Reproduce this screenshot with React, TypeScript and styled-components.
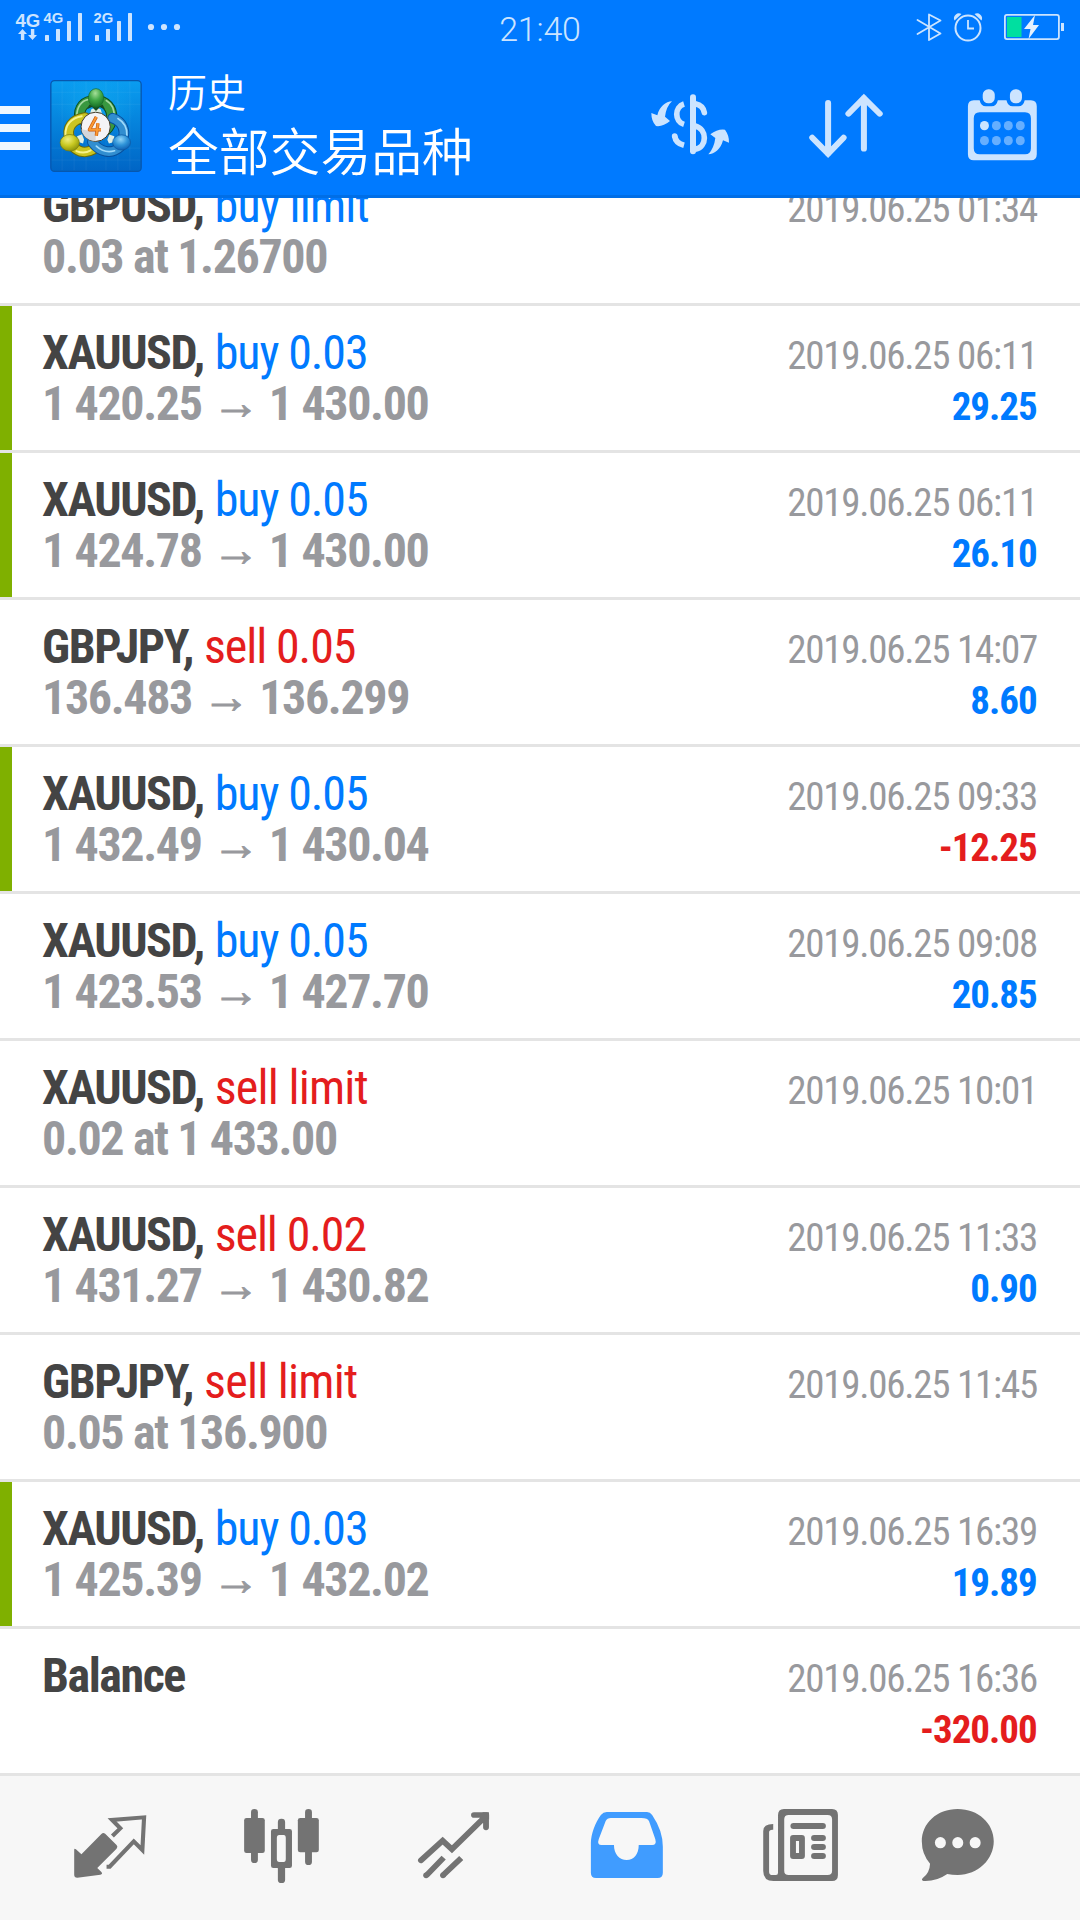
import React from "react";
import styled, { createGlobalStyle } from "styled-components";

const BLUE = "#007aff";
const RED = "#e41d1d";
const GREY = "#98999d";
const PALE = "#cce4ff";
const ICON = "#737373";

const GlobalStyle = createGlobalStyle`
  *, *::before, *::after { box-sizing: border-box; }
  body { margin: 0; background: #fff; }
`;

const Screen = styled.div`
  width: 1080px;
  height: 1920px;
  display: flex;
  flex-direction: column;
  overflow: hidden;
  background: #fff;
  font-family: "Roboto Condensed", Roboto, "Liberation Sans", sans-serif;
`;

const Header = styled.header`
  flex: none;
  height: 198px;
  background: ${BLUE};
  border-bottom: 3px solid #006ee6;
`;

const StatusBar = styled.div`
  height: 54px;
  display: grid;
  grid-template-columns: 1fr 120px 1fr;
  align-items: center;
`;

const Clock = styled.time`
  font-family: Roboto, "Liberation Sans", sans-serif;
  font-weight: 350;
  font-size: 34px;
  line-height: 50px;
  padding-top: 4px;
  text-align: center;
  letter-spacing: -0.2px;
  color: ${PALE};
`;

const StatusRight = styled.div`
  display: flex;
  justify-content: flex-end;
`;

const AppBar = styled.div`
  height: 141px;
  display: flex;
  align-items: center;
`;

const MenuButton = styled.div`
  width: 30px;
  display: flex;
  flex-direction: column;
  gap: 10px;
  padding-top: 6px;
`;

const MenuLine = styled.i`
  height: 8px;
  background: #eff7ff;
`;

const LogoBox = styled.div`
  width: 92px;
  height: 92px;
  margin-left: 20px;
  margin-top: 2px;
`;

const Titles = styled.div`
  flex: 1;
  padding: 0 0 7px 26px;
  color: #fff;
  font-family: "Noto Sans CJK SC", sans-serif;
  font-weight: 350;
  white-space: nowrap;
`;

const Subtitle = styled.div`
  font-size: 39px;
  line-height: 56px;
`;

const Title = styled.div`
  font-size: 50.8px;
  line-height: 62px;
`;

const Action = styled.div`
  width: 156px;
  display: flex;
  justify-content: center;
`;

const List = styled.main`
  flex: none;
  height: 1578px;
  overflow: hidden;
`;

const Row = styled.article<{ $marked?: boolean; $clipped?: boolean }>`
  height: 147px;
  margin-top: ${(p) => (p.$clipped ? "-39px" : "0")};
  padding: 21px 42px 0 30px;
  border-bottom: 3px solid #e4e4e4;
  background: linear-gradient(#7fb000, #7fb000) no-repeat 0 0 / ${(p) => (p.$marked ? "12px" : "0")} 100%;
`;

const Line = styled.div`
  height: 51px;
  line-height: 51px;
  padding-left: 12px;
  display: flex;
  justify-content: space-between;
  align-items: baseline;
  white-space: nowrap;
`;

const Operation = styled.span`
  font-size: 48px;
`;

const Symbol = styled.b`
  color: #444;
  letter-spacing: -1.45px;
`;

const Side = styled.span<{ $sell?: boolean; $pending?: boolean }>`
  color: ${(p) => (p.$sell ? RED : BLUE)};
  letter-spacing: ${(p) => (p.$pending ? "-0.75px" : "-1.1px")};
`;

const Price = styled.span`
  font-size: 48px;
  font-weight: 700;
  letter-spacing: -1.37px;
  color: ${GREY};
`;

const Arrow = styled.span`
  margin: 0 0.6px;
  vertical-align: 1px;
  line-height: 1;
  -webkit-text-stroke: 0.9px ${GREY};
`;

const When = styled.time`
  margin-right: 1px;
  font-size: 39px;
  letter-spacing: -1.24px;
  color: ${GREY};
`;

const Profit = styled.span<{ $loss?: boolean }>`
  margin-right: 1.4px;
  font-size: 39px;
  font-weight: 700;
  letter-spacing: -1.05px;
  color: ${(p) => (p.$loss ? RED : BLUE)};
`;

const TabBar = styled.nav`
  flex: none;
  height: 144px;
  padding: 0 24px;
  display: flex;
  background: #f7f7f7;
`;

const Tab = styled.div`
  width: 172px;
  display: flex;
  align-items: center;
  justify-content: center;
`;

const Glyph = styled.svg`
  display: block;
  width: 84px;
  height: 84px;
  overflow: visible;
`;

type Deal = {
  symbol: string;
  side?: string;
  price?: string;
  close?: string;
  time: string;
  profit?: string;
  marked?: boolean;
};

const deals: Deal[] = [
  { symbol: "GBPUSD,", side: "buy limit", price: "0.03 at 1.26700", time: "2019.06.25 01:34" },
  { symbol: "XAUUSD,", side: "buy 0.03", price: "1 420.25", close: "1 430.00", time: "2019.06.25 06:11", profit: "29.25", marked: true },
  { symbol: "XAUUSD,", side: "buy 0.05", price: "1 424.78", close: "1 430.00", time: "2019.06.25 06:11", profit: "26.10", marked: true },
  { symbol: "GBPJPY,", side: "sell 0.05", price: "136.483", close: "136.299", time: "2019.06.25 14:07", profit: "8.60" },
  { symbol: "XAUUSD,", side: "buy 0.05", price: "1 432.49", close: "1 430.04", time: "2019.06.25 09:33", profit: "-12.25", marked: true },
  { symbol: "XAUUSD,", side: "buy 0.05", price: "1 423.53", close: "1 427.70", time: "2019.06.25 09:08", profit: "20.85" },
  { symbol: "XAUUSD,", side: "sell limit", price: "0.02 at 1 433.00", time: "2019.06.25 10:01" },
  { symbol: "XAUUSD,", side: "sell 0.02", price: "1 431.27", close: "1 430.82", time: "2019.06.25 11:33", profit: "0.90" },
  { symbol: "GBPJPY,", side: "sell limit", price: "0.05 at 136.900", time: "2019.06.25 11:45" },
  { symbol: "XAUUSD,", side: "buy 0.03", price: "1 425.39", close: "1 432.02", time: "2019.06.25 16:39", profit: "19.89", marked: true },
  { symbol: "Balance", time: "2019.06.25 16:36", profit: "-320.00" },
];

function Signal() {
  return (
    <svg width="200" height="54" viewBox="0 0 200 54" fill={PALE} fontFamily="Liberation Sans, sans-serif" fontWeight="700">
      <text x="15.5" y="26.6" fontSize="18.6">4G</text>
      <text x="43.5" y="23.3" fontSize="14.8">4G</text>
      <text x="93.6" y="23.3" fontSize="14.8">2G</text>
      <path d="M22.500 29l4.500 5h-2.700v6h-3.400v-6H18zM32.500 40l4.500-5h-2.700v-6h-3.400v6H28z" />
      {[45, 95].map((x) => (
        <g key={x}>
          <rect x={x} y="35" width="4" height="6" rx="0.6" />
          <rect x={x + 11} y="29" width="4" height="12" rx="0.6" />
          <rect x={x + 22} y="21" width="4" height="20" rx="0.6" />
          <rect x={x + 33} y="13" width="4" height="28" rx="0.6" />
        </g>
      ))}
      <circle cx="151" cy="27" r="3.1" />
      <circle cx="164" cy="27" r="3.1" />
      <circle cx="177" cy="27" r="3.1" />
    </svg>
  );
}

function Power() {
  return (
    <svg width="170" height="54" viewBox="910 0 170 54" fill="none" stroke={PALE} strokeWidth="1.8">
      <path d="M917.5 20l23 13.5-11.5 6.5V14.500l11.500 6L917.500 34" strokeLinejoin="round" strokeLinecap="round" />
      <circle cx="968" cy="28" r="12.5" strokeWidth="2" />
      <path d="M968 20v8.500h6" />
      <path d="M954.500 20.500a5 5 0 0 1 7-6.500zM981.500 20.500a5 5 0 0 0-7-6.500z" fill={PALE} stroke="none" />
      <rect x="1004.900" y="14.900" width="54" height="24.200" rx="2" />
      <rect x="1007" y="17" width="14.500" height="20" fill="#00dfa0" stroke="none" />
      <rect x="1061" y="23" width="3" height="8" fill={PALE} stroke="none" />
      <path d="M1035 15l-11 14h6.500l-2 10 10.500-14h-6z" fill="#e5f1ff" stroke="none" />
    </svg>
  );
}

function Logo() {
  return (
    <svg width="92" height="92" viewBox="60 29 276 277">
      <defs>
        <linearGradient id="tile" x1="0" y1="0" x2="0" y2="1">
          <stop offset="0" stopColor="#0a9df0" />
          <stop offset="1" stopColor="#0065c5" />
        </linearGradient>
        <radialGradient id="halo">
          <stop offset="0" stopColor="#12b8f4" stopOpacity="0.8" />
          <stop offset="1" stopColor="#12b8f4" stopOpacity="0" />
        </radialGradient>
        <radialGradient id="green" cx="0.45" cy="0.25" r="0.75">
          <stop offset="0" stopColor="#a5df98" />
          <stop offset="0.5" stopColor="#42a948" />
          <stop offset="1" stopColor="#167226" />
        </radialGradient>
        <radialGradient id="yellow" cx="0.4" cy="0.3" r="0.75">
          <stop offset="0" stopColor="#f0ee80" />
          <stop offset="0.5" stopColor="#c9c922" />
          <stop offset="1" stopColor="#858c08" />
        </radialGradient>
        <radialGradient id="blue" cx="0.45" cy="0.3" r="0.75">
          <stop offset="0" stopColor="#8fd4f8" />
          <stop offset="0.5" stopColor="#2e93d8" />
          <stop offset="1" stopColor="#0b58ad" />
        </radialGradient>
      </defs>
      <rect x="62" y="31" width="272" height="273" rx="11" fill="url(#tile)" stroke="#0757ae" strokeWidth="4" />
      <ellipse cx="198" cy="110" rx="120" ry="95" fill="url(#halo)" opacity="0.55" />
      <path d="M96 33v268M132 33v268M168 33v268M228 33v268M264 33v268M300 33v268M64 66h268M64 102h268M64 234h268M64 270h268" stroke="#fff" strokeOpacity="0.06" strokeWidth="3" />
      <g fill="none" strokeLinecap="round">
        <path d="M149 146C145 111 163 91 196 91s51 24 49 52q-2 23-18 37" stroke="#0c4d24" strokeWidth="34" />
        <path d="M149 146C145 111 163 91 196 91s51 24 49 52q-2 23-18 37" stroke="#39983f" strokeWidth="28" />
        <path d="M140 139c0-29 15-48 34-51M229 91c16 9 25 29 24 52" stroke="#a6d8a0" strokeWidth="5" />
        <path d="M120 208c-14-36 8-61 45-66M130 230c17 18 40 20 60 8" stroke="#6b6b08" strokeWidth="32" />
        <path d="M120 208c-14-36 8-61 45-66M130 230c17 18 40 20 60 8" stroke="#cbc420" strokeWidth="26" />
        <path d="M106 195c-1-31 18-52 49-57M139 243c17 7 31 5 43-2" stroke="#f7f28b" strokeWidth="6" />
        <path d="M248 144c29 10 40 36 31 61M271 230c-27 26-63 15-84-14" stroke="#074f9c" strokeWidth="32" />
        <path d="M248 144c29 10 40 36 31 61M271 230c-27 26-63 15-84-14" stroke="#318ed0" strokeWidth="26" />
        <path d="M264 145c20 12 28 31 27 50M254 242c-20 6-41-1-55-14" stroke="#9fdafb" strokeWidth="5" />
      </g>
      <path d="M184 117l14-6 14 6 5 16h-38zM141 198l15-6 6 16-3 12-16-5zM253 198l-15-5-6 16 5 11 16-4z" fill="#dfeee4" />
      <path d="M178 103q20 14 40 0l7 14-15-7-12 12-12-12-15 7z" fill="#174f22" />
      <ellipse cx="198" cy="83" rx="23" ry="28" fill="url(#green)" stroke="#17692a" strokeWidth="2" />
      <ellipse cx="119" cy="218" rx="29" ry="25" fill="url(#yellow)" stroke="#76790c" strokeWidth="2" />
      <ellipse cx="275" cy="217" rx="27" ry="23" fill="url(#blue)" stroke="#0a559e" strokeWidth="2" />
      <circle cx="197" cy="170" r="44" fill="#f4f4f6" stroke="#403a28" strokeWidth="3" />
      <path d="M154 177a43 43 0 0 0 43 36V183q-20 0-43-6z" fill="#d4d6da" />
      <path d="M199 140l-21 39h35M204 159l-5 38" fill="none" stroke="#c45a14" strokeWidth="10" strokeLinejoin="round" />
      <path d="M199 140l-21 39h35M204 159l-5 38" fill="none" stroke="#fb9a33" strokeWidth="6" strokeLinejoin="round" />
    </svg>
  );
}

function CurrencyIcon() {
  return (
    <Glyph viewBox="24 8 252 252" fill={PALE}>
      <rect x="150" y="42" width="18" height="180" rx="9" />
      <g fill="none" stroke={PALE} strokeWidth="17">
        <path d="M132 71c-29 9-29 52 0 61" />
        <path d="M166 70c14 3 25 12 27 27" strokeLinecap="round" />
        <path d="M166 137c36 10 36 62 0 70" />
        <path d="M104 167c2 14 13 24 28 28" />
      </g>
      <circle cx="104" cy="167" r="8.500" />
      <path d="M96 63C77 64 59 78 52 105L34 98q0 25 14 39 21 3 42-15L75 109Q79 78 96 63zM205 222c19-1 37-15 44-42l18 7q1-21-12-39-22-3-44 14l15 11q-4 31-21 49z" />
    </Glyph>
  );
}

function SortIcon() {
  return (
    <Glyph viewBox="767 248 244 252" preserveAspectRatio="none" fill="none" stroke={PALE} strokeWidth="17.500" strokeLinecap="round">
      <path d="M837 308v152M791 412l46 48 45-48M941 445V293M896 340l45-47 46 47" />
    </Glyph>
  );
}

function CalendarIcon() {
  return (
    <Glyph viewBox="1220 248 244 252" preserveAspectRatio="none" fill={PALE}>
      <path fillRule="evenodd" d="M1260 300h17q4 18 18 18h17q14 0 18-18h25q4 18 18 18h17q14 0 18-18h18q17 0 17 18v144q0 18-17 18h-166q-17 0-17-18V318q0-18 17-18zM1277 336q-17 0-17 18v90q0 18 17 18h132q17 0 17-18v-90q0-18-17-18z" />
      <rect x="1286" y="267" width="35" height="42" rx="16" />
      <rect x="1365" y="267" width="35" height="42" rx="16" />
      {[0, 1, 2, 3].map((i) => (
        <g key={i} fill="#66afff">
          <ellipse cx={1291 + i * 34.700} cy="376" rx="13" ry="14" fill={i === 0 ? PALE : undefined} />
          <ellipse cx={1291 + i * 34.700} cy="421" rx="13" ry="14" />
        </g>
      ))}
    </Glyph>
  );
}

function QuotesIcon() {
  return (
    <Glyph viewBox="197 138 244 252" preserveAspectRatio="none" fill={ICON}>
      <path d="M215 270q0-6 5-2l16 15 58-61q5-6 11-1l33 34q5 5 0 11l-56 58 12 12q5 6-3 8l-67 9q-9 0-9-9z" />
      <path fill="none" stroke={ICON} strokeWidth="12" d="M326 228l23-23-24-25 93-8-5 98-25-26-70 76h-9" />
    </Glyph>
  );
}

function ChartIcon() {
  return (
    <Glyph viewBox="697 138 244 252" preserveAspectRatio="none" fill={ICON}>
      <rect x="729" y="147" width="20" height="162" rx="10" />
      <rect x="709" y="174" width="60" height="105" rx="7" />
      <rect x="886" y="147" width="20" height="168" rx="10" />
      <rect x="865" y="174" width="61" height="103" rx="7" />
      <rect x="807" y="176" width="21" height="45" rx="10" />
      <rect x="807" y="315" width="21" height="54" rx="10" />
      <path fillRule="evenodd" d="M794 207h47q7 0 7 7v103q0 7-7 7h-47q-7 0-7-7V214q0-7 7-7zM811 225q-7 0-7 9v63q0 9 7 9h13q6 0 6-9v-63q0-9-6-9z" />
    </Glyph>
  );
}

function TradeIcon() {
  return (
    <Glyph viewBox="1196 138 244 252" preserveAspectRatio="none" fill="none" stroke={ICON} strokeWidth="17">
      <path d="M1222 301l63-59 27 26 95-96M1376 165h35v37" strokeLinecap="round" />
      <path d="M1400 157h12q8 0 8 8v14z" fill={ICON} stroke="none" />
      <path d="M1288 293l-50 53M1339 294l-53 52" />
      <g fill={ICON} stroke="none">
        <circle cx="1237" cy="346" r="8.500" />
        <circle cx="1286" cy="346" r="8.500" />
      </g>
    </Glyph>
  );
}

function HistoryIcon() {
  return (
    <Glyph viewBox="128 138 244 252" preserveAspectRatio="none" fill="#409cff">
      <path fillRule="evenodd" d="M194 156h117q9 0 15 9 31 47 31 95v78q0 16-15 16H163q-15 0-15-16v-88c0-28 13-62 29-85q7-9 17-9zM206 174q-11 0-15 9l-20 54q-6 18 8 18h36c0 28 16 45 37 45s35-17 35-45h39q14 0 9-18l-18-53q-4-10-22-10z" />
    </Glyph>
  );
}

function NewsIcon() {
  return (
    <Glyph viewBox="627 138 244 252" preserveAspectRatio="none" fill={ICON}>
      <path fillRule="evenodd" d="M708 147h140q17 0 17 18v180q0 18-17 18H678q-30 0-30-30V213q0-21 29-21v17q-12-1-12 8v118q0 10 10 10h10q6 0 6-7V165q0-18 17-18zM722 165q-13 0-13 13v154q0 13 13 13h113q13 0 13-13V178q0-13-13-13z" />
      <rect x="727" y="189" width="103" height="18" rx="9" />
      <path fillRule="evenodd" d="M735 225h25q9 0 9 9v54q0 9-9 9h-25q-9 0-9-9v-54q0-9 9-9zM743 243v36h9v-36z" />
      <rect x="787" y="225" width="43" height="18" rx="9" />
      <rect x="787" y="252" width="43" height="18" rx="9" />
      <rect x="787" y="279" width="43" height="18" rx="9" />
    </Glyph>
  );
}

function MessagesIcon() {
  return (
    <Glyph viewBox="1127 138 244 252" preserveAspectRatio="none" fill={ICON}>
      <path d="M1213 147c60 0 105 43 105 97s-45 101-105 101q-16 0-30-3-32 23-69 21-8-3-2-9 20-16 21-43-24-28-24-67c0-54 44-97 104-97z" />
      <g fill="#f7f7f7">
        <ellipse cx="1163" cy="248" rx="16" ry="17" />
        <ellipse cx="1213.500" cy="248" rx="16" ry="17" />
        <ellipse cx="1264" cy="248" rx="16" ry="17" />
      </g>
    </Glyph>
  );
}

export default function App() {
  return (
    <Screen>
      <GlobalStyle />
      <Header>
        <StatusBar>
          <Signal />
          <Clock>21:40</Clock>
          <StatusRight>
            <Power />
          </StatusRight>
        </StatusBar>
        <AppBar>
          <MenuButton>
            <MenuLine />
            <MenuLine />
            <MenuLine />
          </MenuButton>
          <LogoBox>
            <Logo />
          </LogoBox>
          <Titles>
            <Subtitle>历史</Subtitle>
            <Title>全部交易品种</Title>
          </Titles>
          <Action><CurrencyIcon /></Action>
          <Action><SortIcon /></Action>
          <Action><CalendarIcon /></Action>
        </AppBar>
      </Header>
      <List>
        {deals.map((d, i) => (
          <Row key={i} $marked={d.marked} $clipped={i === 0}>
            <Line>
              <Operation>
                <Symbol>{d.symbol}</Symbol>{" "}
                {d.side && (
                  <Side $sell={d.side.startsWith("sell")} $pending={d.side.endsWith("limit")}>
                    {d.side}
                  </Side>
                )}
              </Operation>
              <When>{d.time}</When>
            </Line>
            <Line>
              <Price>
                {d.price ?? "\u00a0"}
                {d.close && <> <Arrow>→</Arrow> {d.close}</>}
              </Price>
              {d.profit && <Profit $loss={d.profit.startsWith("-")}>{d.profit}</Profit>}
            </Line>
          </Row>
        ))}
      </List>
      <TabBar>
        <Tab><QuotesIcon /></Tab>
        <Tab><ChartIcon /></Tab>
        <Tab><TradeIcon /></Tab>
        <Tab><HistoryIcon /></Tab>
        <Tab><NewsIcon /></Tab>
        <Tab><MessagesIcon /></Tab>
      </TabBar>
    </Screen>
  );
}
